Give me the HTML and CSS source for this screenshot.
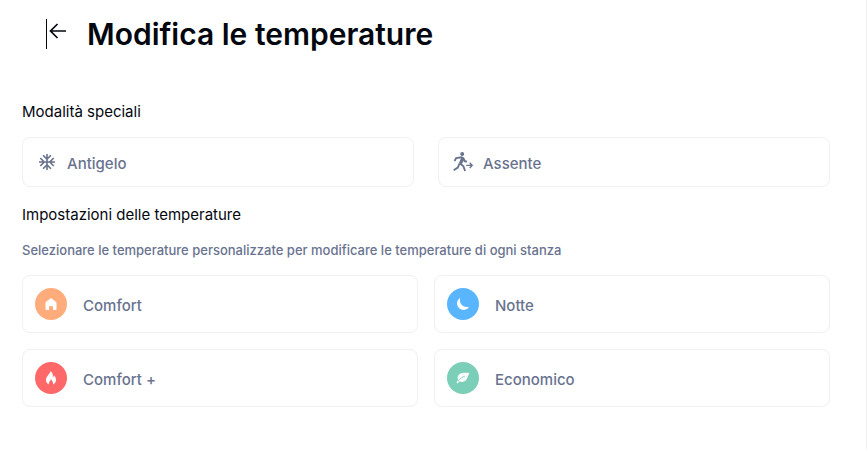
FILE: index.html
```html
<!DOCTYPE html>
<html lang="it">
<head>
<meta charset="utf-8">
<meta name="viewport" content="width=device-width, initial-scale=1">
<title>Modifica le temperature</title>
<link rel="stylesheet" href="styles.css">
</head>
<body>
<main class="page">
  <header class="header">
    <button class="back" type="button" aria-label="Indietro">
      <svg width="18" height="16" viewBox="0 0 18 16" fill="none" stroke="#03070f" stroke-width="1.7"><path d="M17 8H1.500M8.500 1 1.500 8l7 7"/></svg>
    </button>
    <h1 class="title">Modifica le temperature</h1>
  </header>

  <section>
    <h2 class="heading">Modalità speciali</h2>
    <div class="modes">
      <button class="card mode" type="button">
        <svg class="mode-icon" width="16" height="16" viewBox="2 2 20 20" fill="currentColor"><path d="M22 11h-4.170l3.240-3.240-1.410-1.420L15 11h-2V9l4.660-4.660-1.420-1.410L13 6.170V2h-2v4.170L7.760 2.930 6.340 4.340 11 9v2H9L4.340 6.340 2.930 7.760 6.170 11H2v2h4.170l-3.240 3.240 1.410 1.420L9 13h2v2l-4.660 4.660 1.420 1.410L11 17.830V22h2v-4.170l3.240 3.240 1.420-1.410L13 15v-2h2l4.660 4.660 1.410-1.420L17.830 13H22z"/></svg>
        <span>Antigelo</span>
      </button>
      <button class="card mode" type="button">
        <svg class="mode-icon" width="20" height="20" viewBox="0 0 20 20" fill="none" stroke="currentColor"><circle cx="9.200" cy="2" r="2" fill="currentColor" stroke="none"/><path d="M8.600 5 5.900 11l3 1 2.500-4.500-1-2.300z" fill="currentColor" stroke="none"/><path stroke-width="1.900" d="M1.500 9 3.200 6.100l5.300-.8 2.100 1.300 1.200 2.600 2.200.5M6.800 11.200l3.600 3 1.700 4.800M6.500 11.500l-1.700 4L.7 18.300"/><path stroke-width="1.400" d="M13.200 13.400h5.900M16.700 10.800l2.500 2.600-2.500 2.600"/></svg>
        <span>Assente</span>
      </button>
    </div>
  </section>

  <section>
    <h2 class="heading">Impostazioni delle temperature</h2>
    <p class="hint">Selezionare le temperature personalizzate per modificare le temperature di ogni stanza</p>
    <div class="presets">
      <button class="card preset" type="button">
        <span class="badge comfort"><svg width="12" height="12" viewBox="0 0 12 12" fill="#fff"><path d="M6 0 .5 4.200V11q0 1 1 1H4V8.200h4V12h2.500q1 0 1-1V4.200z"/></svg></span>
        <span>Comfort</span>
      </button>
      <button class="card preset" type="button">
        <span class="badge night"><svg width="12" height="12" viewBox="0 0 12 12" fill="#fff"><path d="M3.300 0C.8 1.400-.5 4.200.2 7c.8 3.300 3.800 5.300 7.100 4.900C9.400 11.600 11.200 10.400 12 8.700 9.300 9.400 6.500 8.800 4.700 6.800 3 4.900 2.500 2.300 3.300 0z"/></svg></span>
        <span>Notte</span>
      </button>
      <button class="card preset" type="button">
        <span class="badge comfort-plus"><svg width="12" height="14" viewBox="0 0 12 14" fill="#fff"><path d="M5.500 0C5.800 2.500 1 4.700 1 9c0 2.200 1.200 3.800 2.900 4.600C3.300 11.500 4.800 10.200 6 8.200c1.400 1.900 2.600 3.400 2 5.300C9.800 12.700 11 11.200 11 9c0-2-.9-3.700-2-4.800-.1 1-.5 1.700-1.100 2.100C8 3.800 7.600 1.300 5.500 0z"/></svg></span>
        <span>Comfort +</span>
      </button>
      <button class="card preset" type="button">
        <span class="badge eco"><svg width="14" height="12" viewBox="0 0 14 12"><path fill="#fff" d="M13.500 1C9.500.7 5.500.5 3.300 2.300 1.500 3.800 1.100 6.100 2.200 7.800L.5 10.700l1.100.7 1.700-2.100c2.500 1.200 5.400.8 7.200-1.700C11.900 5.700 12 3 13.500 1z"/><path fill="none" stroke="#7bceb7" stroke-width=".9" d="M2.300 8.800C4 6.500 6 5.200 8.900 4.200"/></svg></span>
        <span>Economico</span>
      </button>
    </div>
  </section>
</main>
</body>
</html>
```
FILE: styles.css
```css
* {
  box-sizing: border-box;
}

body {
  margin: 0;
  background: #fff;
  color: #03070f;
  font-family: Inter, "Liberation Sans", sans-serif;
}

.page {
  min-height: 100vh;
  padding: 16px 36px 40px 22px;
  border-right: 1px solid #f0f0f0;
}

.header {
  display: flex;
  align-items: center;
  gap: 20px;
  height: 36px;
  margin: 0 0 48px 24px;
}

.back {
  display: flex;
  align-items: center;
  height: 30px;
  padding: 0 0 6px 2px;
  border: 0;
  border-left: 1px solid #03070f;
  background: none;
}

.title {
  margin: 0;
  font-size: 30px;
  font-weight: 600;
  line-height: 36px;
}

.heading {
  margin: 0;
  font-size: 15px;
  font-weight: 400;
  line-height: 24px;
}

.modes {
  display: grid;
  grid-template-columns: 1fr 1fr;
  gap: 24px;
  margin: 13px 0 16px;
}

.card {
  display: flex;
  align-items: center;
  border: 1px solid #f0f0f0;
  border-radius: 8px;
  background: #fff;
  color: #69738f;
  font-family: inherit;
  font-size: 15px;
  font-weight: 500;
  line-height: 24px;
  text-align: left;
}

.mode {
  height: 50px;
  padding: 4px 14px 0;
}

.mode-icon {
  flex: none;
  margin: 0 12px 4px 2px;
}

.mode + .mode .mode-icon {
  margin: 0 10px 4px 0;
}

.hint {
  margin: 13px 0 15px;
  color: #69738f;
  font-size: 13px;
  font-weight: 500;
  line-height: 20px;
}

.presets {
  display: grid;
  grid-template-columns: 1fr 1fr;
  gap: 16px;
}

.preset {
  gap: 16px;
  height: 58px;
  padding: 4px 12px 0;
}

.badge {
  display: flex;
  align-items: center;
  justify-content: center;
  flex: none;
  width: 32px;
  height: 32px;
  margin-bottom: 4px;
  border-radius: 50%;
}

.comfort {
  background: #ffac7c;
}

.night {
  background: #5ab5ff;
}

.comfort-plus {
  background: #ff6868;
}

.eco {
  background: #7bceb7;
}
```
